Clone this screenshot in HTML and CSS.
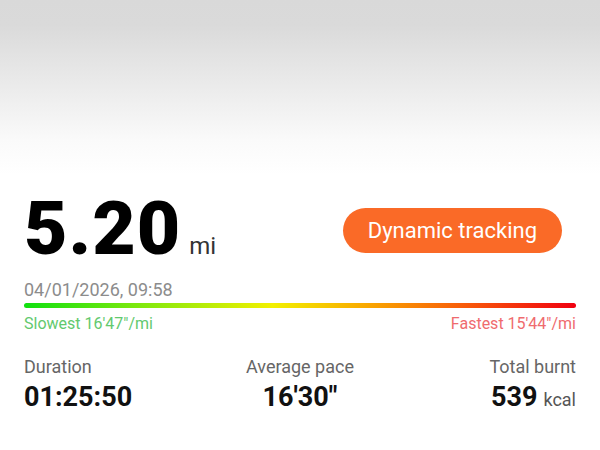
FILE: index.html
```html
<!DOCTYPE html>
<html>
<head>
<meta charset="utf-8">
<link rel="stylesheet" href="styles.css">
</head>
<body>
<div class="page">
  <div class="hero">
    <div class="distance"><span class="big">5.20</span><span class="unit">mi</span></div>
    <div class="btn">Dynamic tracking</div>
  </div>
  <div class="date">04/01/2026, 09:58</div>
  <div class="bar"></div>
  <div class="pace-range">
    <span class="slow">Slowest 16'47"/mi</span>
    <span class="fast">Fastest 15'44"/mi</span>
  </div>
  <div class="stats">
    <div class="stat left">
      <div class="label">Duration</div>
      <div class="value">01:25:50</div>
    </div>
    <div class="stat center">
      <div class="label">Average pace</div>
      <div class="value">16'30"</div>
    </div>
    <div class="stat right">
      <div class="label">Total burnt</div>
      <div class="value">539<span class="vunit">kcal</span></div>
    </div>
  </div>
</div>
</body>
</html>
```

FILE: styles.css
```css
html, body {
  margin: 0;
  padding: 0;
}
body {
  width: 600px;
  height: 450px;
  overflow: hidden;
  font-family: Roboto, "Noto Sans", sans-serif;
  background: #fff linear-gradient(to bottom, #d9d9d9 0px, #dadada 25px, #ececec 90px, #fafafa 140px, #ffffff 175px) no-repeat;
  background-size: 100% 180px;
}
.page {
  padding: 191px 24px 0 24px;
  display: flex;
  flex-direction: column;
}
.hero {
  display: flex;
  justify-content: space-between;
  align-items: center;
  height: 75px;
}
.distance {
  display: flex;
  align-items: baseline;
}
.big {
  font-size: 75px;
  line-height: 1;
  font-weight: 900;
  color: #000;
  letter-spacing: 1px;
}
.unit {
  font-size: 24px;
  color: #333;
  margin-left: 8px;
}
.btn {
  margin-top: 4px;
  margin-right: 14px;
  height: 45px;
  padding: 0 25px;
  border-radius: 23px;
  background: #fa6a27;
  color: #fff;
  font-size: 22px;
  display: flex;
  align-items: center;
}
.date {
  margin-top: 13px;
  font-size: 18px;
  line-height: 22px;
  color: #8c8c8c;
}
.bar {
  margin-top: 2px;
  height: 5px;
  border-radius: 3px;
  background: linear-gradient(to right, #10e010 0%, #7ae80e 20%, #f2f000 45%, #f9a800 62%, #f85a0a 80%, #f00010 100%);
}
.pace-range {
  margin-top: 6px;
  display: flex;
  justify-content: space-between;
  font-size: 16px;
  line-height: 20px;
}
.slow { color: #62c96e; }
.fast { color: #ef6b6e; }
.stats {
  margin-top: 22px;
  display: grid;
  grid-template-columns: 1fr 1fr 1fr;
}
.stat { display: flex; flex-direction: column; }
.stat.left { align-items: flex-start; }
.stat.center { align-items: center; }
.stat.right { align-items: flex-end; }
.label {
  font-size: 18px;
  line-height: 22px;
  color: #666;
}
.value {
  margin-top: 3px;
  font-size: 27px;
  line-height: 32px;
  font-weight: 700;
  color: #111;
}
.vunit {
  font-size: 18px;
  font-weight: 400;
  color: #555;
  margin-left: 6px;
}
```
